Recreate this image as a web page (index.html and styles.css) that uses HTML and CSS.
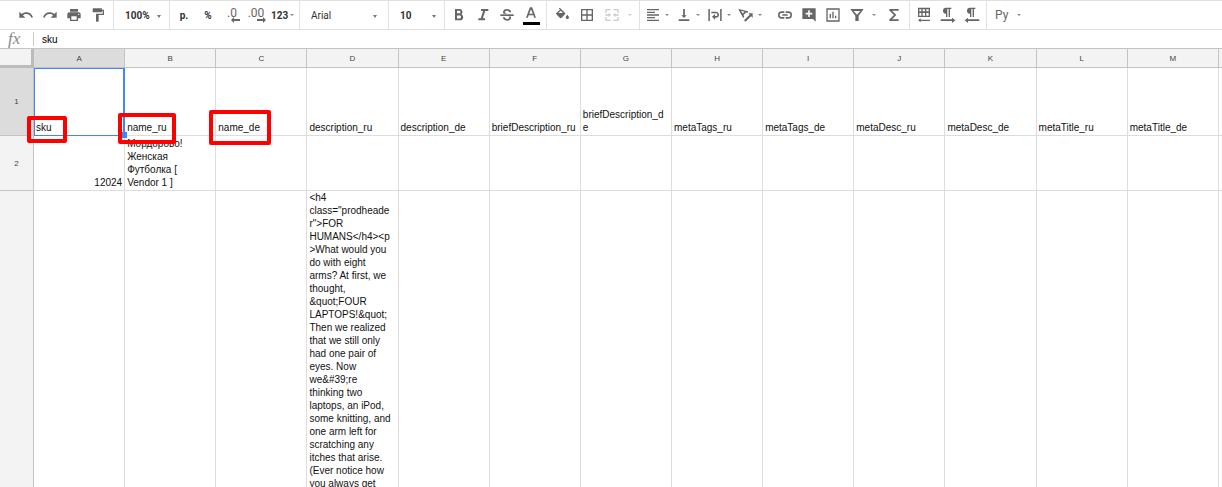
FILE: index.html
```html
<!DOCTYPE html>
<html lang="en">
<head>
<meta charset="utf-8">
<title>Spreadsheet</title>
<link rel="stylesheet" href="styles.css">
</head>
<body>
<div class="toolbar" role="toolbar" aria-label="Formatting">
  <div class="group group-history">
    <button class="tool" aria-label="Undo"><svg viewBox="0 0 24 24"><path d="M12.500 8c-2.650 0-5.050 1-6.900 2.600L2 7v9h9l-3.620-3.620c1.390-1.160 3.160-1.880 5.120-1.880 3.540 0 6.550 2.310 7.600 5.500l2.370-.78C21.080 11.030 17.150 8 12.500 8z"/></svg></button>
    <button class="tool" aria-label="Redo"><svg viewBox="0 0 24 24"><path d="M18.400 10.600C16.550 9 14.150 8 11.500 8c-4.650 0-8.580 3.030-9.960 7.220L3.900 16c1.050-3.190 4.050-5.500 7.600-5.500 1.950 0 3.730.720 5.120 1.880L13 16h9V7l-3.600 3.600z"/></svg></button>
    <button class="tool" aria-label="Print"><svg viewBox="0 0 24 24"><path d="M19 8H5c-1.660 0-3 1.340-3 3v6h4v4h12v-4h4v-6c0-1.660-1.340-3-3-3zm-3 11H8v-5h8v5zm3-7c-.55 0-1-.45-1-1s.45-1 1-1 1 .45 1 1-.45 1-1 1zm-1-9H6v4h12V3z"/></svg></button>
    <button class="tool" aria-label="Paint format"><svg viewBox="0 0 24 24"><path d="M18 4V3c0-.55-.45-1-1-1H5c-.55 0-1 .45-1 1v4c0 .55.45 1 1 1h12c.55 0 1-.45 1-1V6h1v4H9v11c0 .55.45 1 1 1h2c.55 0 1-.45 1-1v-9h8V4h-3z"/></svg></button>
  </div>
  <div class="group">
    <div class="pick pick-narrow"><select aria-label="Zoom" class="bold"><option>100%</option></select></div>
  </div>
  <div class="group group-number">
    <button class="tool text" aria-label="Format as currency">p.</button>
    <button class="tool text" aria-label="Format as percent">%</button>
    <button class="tool decimals" aria-label="Decrease decimal places">.0<svg viewBox="0 0 16 6"><path d="M6 0v2h6v2H6v2L3 3z"/></svg></button>
    <button class="tool decimals" aria-label="Increase decimal places">.00<svg viewBox="0 0 16 6"><path d="M11 0v2H5v2h6v2l3-3z"/></svg></button>
    <button class="formats" aria-label="More formats">123<span class="caret"></span></button>
  </div>
  <div class="group">
    <div class="pick pick-wide"><select aria-label="Font"><option>Arial</option></select></div>
  </div>
  <div class="group">
    <div class="pick pick-narrow"><select aria-label="Font size" class="bold"><option>10</option></select></div>
  </div>
  <div class="group group-style">
    <button class="tool" aria-label="Bold"><svg viewBox="0 0 24 24"><path d="M15.600 10.790c.97-.67 1.650-1.770 1.650-2.790 0-2.760-1.750-5-4-5H6v17h8.040c2.590 0 4.210-2.200 4.210-4.790 0-1.820-.96-3.620-2.650-4.420zM9 5.700h3.500c1.100 0 1.700.87 1.700 1.900s-.67 1.900-1.700 1.900H9zM13 17.200H9v-4.400h4c1.300 0 2 1 2 2.200s-.8 2.200-2 2.200z"/></svg></button>
    <button class="tool" aria-label="Italic"><svg viewBox="0 0 24 24"><path d="M9 3v3h3.200L8.600 17H5v3h10v-3h-3.200l3.600-11H20V3z"/></svg></button>
    <button class="tool" aria-label="Strikethrough"><svg viewBox="0 0 24 24"><path d="M2 11h20v2.500H2z"/><path d="M18 8C18 4.800 15.500 3 12 3S6 4.900 6 7.800c0 1 .4 1.800 1.200 2.400h6.300c-2.500-.8-4.600-1-4.600-2.500 0-1.200 1-2.100 3.100-2.100s3.100.9 3.100 2.400zM6 15.500c0 3.200 2.500 5 6 5s6-1.900 6-4.500c0-.6-.1-1.100-.4-1.700h-3.500c.7.400 1.100.9 1.100 1.700 0 1.200-1.100 2-3.200 2s-3.100-.9-3.100-2.500z"/></svg></button>
    <button class="tool text-color" aria-label="Text color"><svg viewBox="0 0 24 24"><path d="M10.300 2L4.500 17.500h2.800L8.500 14h7l1.200 3.500h2.800L13.700 2zm-.9 9.500L12 4.800l2.600 6.700z"/></svg></button>
  </div>
  <div class="group group-cells">
    <button class="tool" aria-label="Fill color"><svg viewBox="0 0 24 24"><path d="M16.560 8.940L8.620 1 7.210 2.410l1.880 1.880-5.650 4.650c-.59.590-.59 1.540 0 2.120l5.500 5.500c.58.580 1.540.58 2.120 0l5.500-5.500c.59-.58.59-1.530 0-2.120zM6.500 9L10 5.700 13.300 9z"/><path d="M20 11.500s-2.400 2.500-2.400 4.100a2.400 2.400 0 0 0 4.800 0c0-1.600-2.400-4.100-2.400-4.100z"/></svg></button>
    <button class="tool" aria-label="Borders"><svg viewBox="0 0 24 24"><path d="M3 3v18h18V3H3zm8 16H5v-6h6v6zm0-8H5V5h6v6zm8 8h-6v-6h6v6zm0-8h-6V5h6v6z"/></svg></button>
    <button class="tool" aria-label="Merge cells" disabled><svg viewBox="0 0 24 24"><path d="M2 3h8v2H4v4H2zM14 3h8v6h-2V5h-6zM2 15h2v4h6v2H2zM20 15h2v6h-8v-2h6zM2 11h5V8.500l3.500 3.500L7 15.500V13H2zM22 11h-5V8.500L13.500 12l3.500 3.500V13h5z"/></svg></button>
    <button class="drop" aria-label="Merge type" disabled><span class="caret"></span></button>
  </div>
  <div class="group group-insert">
    <button class="menu" aria-label="Horizontal align"><svg viewBox="0 0 24 24"><path d="M15 15H3v2h12v-2zm0-8H3v2h12V7zM3 13h18v-2H3v2zm0 8h18v-2H3v2zM3 3v2h18V3H3z"/></svg><span class="caret"></span></button>
    <button class="menu" aria-label="Vertical align"><svg viewBox="0 0 24 24"><path d="M16 12.500h-2.700V3h-2.600v9.500H8l4 4 4-4zM4 18.500V21h16v-2.500H4z"/></svg><span class="caret"></span></button>
    <button class="menu" aria-label="Text wrapping"><svg viewBox="0 0 24 24"><path d="M2 3h2.300v18H2zM19.700 3H22v18h-2.300zM6.500 7h7c2.700 0 4.500 2 4.500 4.500S16.200 16 13.500 16H12v3l-4.500-4.200L12 10.600v3h1.500c1.300 0 2.100-.9 2.100-2.100s-.8-2.100-2.100-2.100h-7z"/></svg><span class="caret"></span></button>
    <button class="menu" aria-label="Text rotation"><svg viewBox="0 0 24 24"><path d="M1 3l14 3.500v2.300l-2.800-.7-3.900 3.900 1.200 3-1.600 1.600L1 4.600zM4.300 5.500l3 4.300 2.500-2.600z"/><path d="M9 20l8.500-8.500L15.500 9.500H22V16l-2.300-2.300L11.200 22z"/></svg><span class="caret"></span></button>
    <button class="tool tool-link" aria-label="Insert link"><svg viewBox="0 0 24 24"><path d="M3.900 12c0-1.710 1.390-3.100 3.100-3.100h4V6.500H7a5.500 5.500 0 0 0 0 11h4v-2.400H7c-1.710 0-3.100-1.390-3.100-3.100zM8 13.200h8v-2.400H8zM17 6.500h-4v2.400h4c1.710 0 3.100 1.390 3.100 3.100s-1.390 3.100-3.100 3.100h-4v2.400h4a5.500 5.500 0 0 0 0-11z"/></svg></button>
    <button class="tool" aria-label="Insert comment"><svg viewBox="0 0 24 24"><path d="M22 2H2v16h16l4 4zm-5 9.200h-3.800V15h-2.400v-3.800H7V8.800h3.800V5h2.400v3.800H17z"/></svg></button>
    <button class="tool" aria-label="Insert chart"><svg viewBox="0 0 24 24"><path d="M2 2v20h20V2H2zm18 18H4V4h16v16zM7 10h2v7H7zM11 7h2v10h-2zM15 13h2v4h-2z"/></svg></button>
    <button class="tool" aria-label="Filter"><svg viewBox="0 0 24 24"><path d="M2 3h20l-7.500 10v8h-5v-8zm5 3l5 5.500L17 6z"/></svg></button>
    <button class="drop" aria-label="Filter views"><span class="caret"></span></button>
    <button class="tool tool-sum" aria-label="Functions"><svg viewBox="0 0 24 24"><path d="M19 3H5v2.200l7 6.800-7 6.800V21h14v-2.600H9.200l6.300-6.400-6.300-6.400H19z"/></svg></button>
  </div>
  <div class="group group-direction">
    <button class="tool" aria-label="Sheet direction"><svg viewBox="0 0 24 24"><path d="M3 1v14h18V1zm2 2.500h3v3H5zm5 0h3.500v3H10zm5.500 0H19v3h-3.500zM5 9h3v4H5zm5 0h3.500v4H10zm5.500 0H19v4h-3.500zM3 20l4-3v2h14v2H7v2z"/></svg></button>
    <button class="tool" aria-label="Left to right"><svg viewBox="0 0 24 24"><path d="M9 10v5h2V3h2v12h2V3h2V1H9a4.500 4.500 0 0 0 0 9zM1 18.500h17V16l5 4-5 4v-3H1z"/></svg></button>
    <button class="tool" aria-label="Right to left"><svg viewBox="0 0 24 24"><path d="M9 10v5h2V3h2v12h2V3h2V1H9a4.500 4.500 0 0 0 0 9zM23 18.500H6V16l-5 4 5 4v-3h17z"/></svg></button>
  </div>
  <div class="group group-input">
    <button class="language" aria-label="Input tools">Ру<span class="caret"></span></button>
  </div>
</div>

<div class="formula">
  <label class="fx" for="formula">fx</label>
  <input id="formula" type="text" value="sku">
</div>

<main class="sheet">
  <table>
    <colgroup><col class="col-index"><col><col><col><col><col><col><col><col><col><col><col><col><col><col class="col-rest"></colgroup>
    <thead>
      <tr><th class="corner"></th><th class="active">A</th><th>B</th><th>C</th><th>D</th><th>E</th><th>F</th><th>G</th><th>H</th><th>I</th><th>J</th><th>K</th><th>L</th><th>M</th><th></th></tr>
    </thead>
    <tbody>
      <tr class="row-names">
        <th class="active">1</th>
        <td class="selected">sku<span class="mark mark-sku"></span></td>
        <td>name_ru<span class="mark mark-ru"></span></td>
        <td>name_de<span class="mark mark-de"></span></td>
        <td>description_ru</td><td>description_de</td><td>briefDescription_ru</td><td>briefDescription_d<br>e</td><td>metaTags_ru</td><td>metaTags_de</td><td>metaDesc_ru</td><td>metaDesc_de</td><td>metaTitle_ru</td><td>metaTitle_de</td><td></td>
      </tr>
      <tr class="row-product">
        <th>2</th>
        <td class="number">12024</td>
        <td>Мордорово!<br>Женская<br>Футболка [<br>Vendor 1 ]</td>
        <td></td><td></td><td></td><td></td><td></td><td></td><td></td><td></td><td></td><td></td><td></td><td></td>
      </tr>
      <tr class="row-long">
        <th></th><td></td><td></td><td></td>
        <td>&lt;h4<br>class="prodheade<br>r"&gt;FOR<br>HUMANS&lt;/h4&gt;&lt;p<br>&gt;What would you<br>do with eight<br>arms? At first, we<br>thought,<br>&amp;quot;FOUR<br>LAPTOPS!&amp;quot;<br>Then we realized<br>that we still only<br>had one pair of<br>eyes. Now<br>we&amp;#39;re<br>thinking two<br>laptops, an iPod,<br>some knitting, and<br>one arm left for<br>scratching any<br>itches that arise.<br>(Ever notice how<br>you always get</td>
        <td></td><td></td><td></td><td></td><td></td><td></td><td></td><td></td><td></td><td></td>
      </tr>
    </tbody>
  </table>
</main>
</body>
</html>
```
FILE: styles.css
```css
* { box-sizing: border-box; }

body {
  margin: 0;
  height: 100vh;
  display: flex;
  flex-direction: column;
  overflow: hidden;
  background: #fff;
  color: #111;
  font: 10px/13px "Liberation Sans", Arial, sans-serif;
}

button, select, input {
  margin: 0;
  padding: 0;
  border: 0;
  background: none;
  color: #333;
  font: inherit;
}

/* Toolbar */
.toolbar {
  flex: none;
  display: flex;
  height: 30px;
  border-top: 1px solid #e0e0e0;
  border-bottom: 1px solid #e0e0e0;
  font-family: Roboto, "Liberation Sans", sans-serif;
}

.group {
  display: flex;
  align-items: center;
  border-right: 1px solid #e2e2e2;
}

.group-history { padding: 0 3px 0 14px; }
.group-number { padding: 0 1px 0 2px; }
.group-style { padding: 0 3px 0 2px; }
.group-cells { gap: 1px; padding: 0 4px 0 3px; }
.group-insert { padding: 0 3px 0 5px; }
.group-direction { padding: 0 2px; }
.group-input { padding-left: 8px; border-right: 0; }

.tool {
  flex: none;
  width: 24px;
  height: 24px;
  display: flex;
  align-items: center;
  justify-content: center;
}

.tool svg, .menu svg {
  width: 16px;
  height: 16px;
  fill: #666;
}

.tool:disabled svg { fill: #ccc; }
.tool-link { margin-left: 4px; }
.tool-sum { margin-left: 3px; }
.text, .bold { font-weight: bold; }

.decimals {
  flex-direction: column;
  color: #666;
  font-size: 12px;
}

.tool.decimals svg {
  height: 6px;
  margin-top: -3px;
  align-self: flex-end;
}

.text-color { flex-direction: column; }

.text-color::after {
  content: "";
  width: 17px;
  height: 3px;
  background: #000;
}

.caret {
  width: 0;
  height: 0;
  border: 2px solid transparent;
  border-top-color: #888;
  border-bottom: 0;
}

:disabled .caret { border-top-color: #ccc; }

.drop {
  width: 10px;
  height: 24px;
  display: flex;
  align-items: center;
  justify-content: center;
}

.menu {
  width: 31px;
  height: 24px;
  display: flex;
  align-items: center;
  gap: 4px;
}

.formats, .language {
  display: flex;
  align-items: center;
  height: 24px;
}

.formats {
  width: 30px;
  padding-left: 3px;
  gap: 2px;
  font-weight: bold;
}

.language {
  gap: 9px;
  color: #666;
  font-size: 12px;
}

.pick {
  position: relative;
  display: flex;
}

.pick select {
  width: 100%;
  height: 24px;
  padding-left: 11px;
  appearance: none;
}

.pick-narrow { width: 55px; }
.pick-wide { width: 88px; }

.pick::after {
  content: "";
  position: absolute;
  top: 12px;
  right: 8px;
  border: 2px solid transparent;
  border-top: 3px solid #777;
  border-bottom: 0;
  pointer-events: none;
}

.pick-wide::after { right: 11px; }

/* Formula bar */
.formula {
  flex: none;
  display: flex;
  align-items: center;
  height: 18px;
}

.fx {
  width: 34px;
  padding-left: 8px;
  border-right: 1px solid #ccc;
  color: #888;
  font: italic 17px/14px "Liberation Serif", serif;
}

.formula input {
  flex: 1;
  padding-left: 8px;
  color: #000;
}

/* Sheet */
.sheet {
  flex: 1;
  min-height: 0;
  overflow: hidden;
  border-top: 1px solid #c4c4c4;
}

table {
  width: 100%;
  table-layout: fixed;
  border-collapse: separate;
  border-spacing: 0;
}

.col-index { width: 34px; }
.col-rest { width: 3px; }

th {
  padding: 0;
  border-right: 1px solid #c4c4c4;
  border-bottom: 1px solid #c4c4c4;
  background: #f3f3f3;
  color: #444;
  font-size: 8px;
  font-weight: normal;
}

thead th { height: 19px; }
th.active { background: #dcdcdc; }
th:last-child, td:last-child { border-right: 0; }

th.corner {
  border-right: 3px solid #bbb;
  border-bottom: 3px solid #bbb;
}

td {
  position: relative;
  padding: 0 0 1px 2px;
  border-right: 1px solid #ddd;
  border-bottom: 1px solid #ddd;
  vertical-align: bottom;
  white-space: nowrap;
}

td:last-child { padding: 0; }

.row-names { height: 68px; }
.row-product { height: 55px; }
.row-long td { vertical-align: top; }
.row-long td, .row-long th { border-bottom: 0; }

td.number {
  padding-right: 2px;
  text-align: right;
}

.selected { z-index: 1; }

.selected::before {
  content: "";
  position: absolute;
  inset: 0 -1px -1px 0;
  border: 1px solid #4285f4;
  border-right-width: 2px;
}

.selected::after {
  content: "";
  position: absolute;
  right: -3px;
  bottom: -3px;
  width: 6px;
  height: 6px;
  background: #4285f4;
}

/* Red callouts laid over the cells */
.mark {
  position: absolute;
  z-index: 2;
  border: 4px solid #f00;
  border-radius: 2px;
}

.mark-sku { left: -7px; bottom: -8px; width: 40px; height: 27px; }
.mark-ru { left: -7px; bottom: -9px; width: 58px; height: 31px; }
.mark-de { left: -7px; bottom: -10px; width: 62px; height: 35px; }
```
